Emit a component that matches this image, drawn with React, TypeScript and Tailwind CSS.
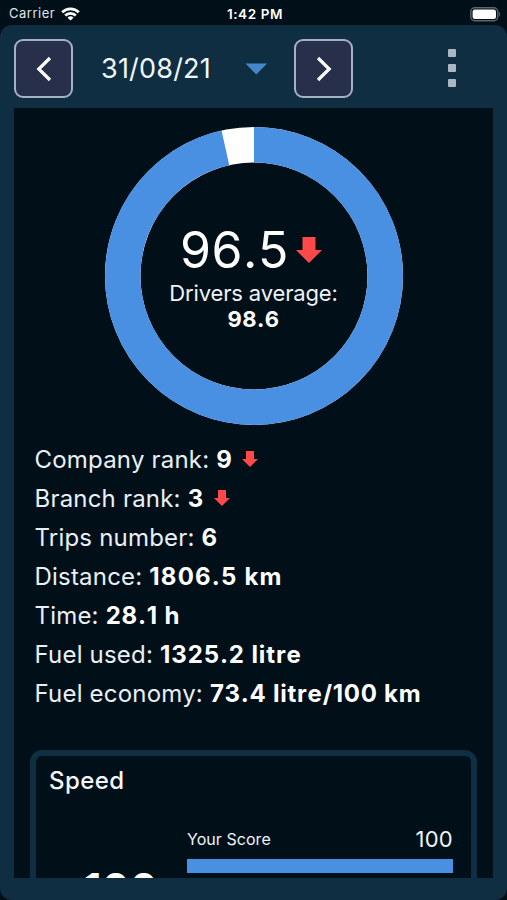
import type { ReactNode } from "react";

const SCORE = 96.5;

const stats = [
  { label: "Company rank:", value: "9", down: true, track: "tracking-[0.4px]" },
  { label: "Branch rank:", value: "3", down: true, track: "tracking-[0.4px]" },
  { label: "Trips number:", value: "6", track: "tracking-[0.4px]" },
  { label: "Distance:", value: "1806.5 km", track: "tracking-[1.2px]" },
  { label: "Time:", value: "28.1 h", track: "tracking-[0.8px]" },
  { label: "Fuel used:", value: "1325.2 litre", track: "tracking-[0.9px]" },
  { label: "Fuel economy:", value: "73.4 litre/100 km", track: "tracking-[0.75px]" },
];

const DownArrow = ({ className }: { className: string }) => (
  <svg viewBox="0 0 26 26" className={className} fill="#ff4949">
    <path d="M6.5 0h13v13H26L13 26 0 13h6.5z" />
  </svg>
);

const StatusBar = () => (
  <div className="h-[25px] grid grid-cols-3 items-center pl-[9px] pr-[6px] pt-[3px] text-[13px] text-[#dfe6ec]">
    <div className="flex items-center gap-[6px]">
      <span className="tracking-[0.5px]">Carrier</span>
      <svg width="19" height="14" viewBox="0 0 19 14" fill="none" stroke="#fff" strokeWidth="2.8">
        <path d="M1.2 5.2a11.8 11.8 0 0 1 16.6 0" />
        <path d="M4.2 8.5a7.5 7.5 0 0 1 10.6 0" />
        <path d="M9.5 13.6 6.5 10.7a4.3 4.3 0 0 1 6 0z" fill="#fff" stroke="none" />
      </svg>
    </div>
    <div className="text-center font-semibold text-white text-[13.5px] tracking-[0.6px] [font-kerning:none]">1:42 PM</div>
    <div className="flex justify-end">
      <svg width="31" height="15" viewBox="0 0 31 15">
        <rect x="0.8" y="0.8" width="27" height="13" rx="4" fill="none" stroke="#5d666d" strokeWidth="1.4" />
        <rect x="2.6" y="2.6" width="23.4" height="9.4" rx="2.2" fill="#fff" />
        <path d="M29 5c1.3.4 1.3 4.2 0 4.6z" fill="#5d666d" />
      </svg>
    </div>
  </div>
);

const NavButton = ({ children }: { children: ReactNode }) => (
  <button className="w-[59px] h-[59px] shrink-0 rounded-[9px] border-2 border-[#a5b1c3] bg-[#272f4b] flex items-center justify-center">
    <svg width="16" height="26" viewBox="0 0 16 26" fill="none" stroke="#fff" strokeWidth="3.2">
      {children}
    </svg>
  </button>
);

const Header = () => (
  <div className="h-[83px] pt-[14px] pl-[14px] pr-[51px] flex items-start">
    <NavButton>
      <path d="M14 2 2.8 13 14 24" />
    </NavButton>
    <div className="w-[221px] h-[59px] pl-[28px] pr-[27px] flex items-center justify-between">
      <span className="text-[27px] leading-none text-[#f0f7fb] whitespace-nowrap tracking-[0.2px]">31/08/21</span>
      <svg width="22" height="12" viewBox="0 0 22 12" fill="#4488ca">
        <path d="M.5 .5H22L11.3 11.5z" />
      </svg>
    </div>
    <NavButton>
      <path d="M2 2 13.2 13 2 24" />
    </NavButton>
    {/* MENU DOTS */}
    <div className="ml-auto h-[58px] flex flex-col items-center justify-center gap-[7px]">
      <div className="w-[8px] h-[8px] rounded-[1px] bg-[#a9b7c5]"></div>
      <div className="w-[8px] h-[8px] rounded-[1px] bg-[#a9b7c5]"></div>
      <div className="w-[8px] h-[8px] rounded-[1px] bg-[#a9b7c5]"></div>
    </div>
  </div>
);

const ScoreRing = () => (
  <div className="mx-auto w-[298px] h-[298px] grid">
    <svg viewBox="0 0 298 298" className="col-start-1 row-start-1 -rotate-90" fill="none" strokeWidth="35.5">
      <circle cx="149" cy="149" r="131.25" stroke="#fff" />
      <circle
        cx="149"
        cy="149"
        r="131.25"
        stroke="#4a90e2"
        pathLength="100"
        strokeDasharray={`${SCORE} ${100 - SCORE}`}
      />
    </svg>
    <div className="col-start-1 row-start-1 z-10 flex flex-col items-center pt-[94px] text-white">
      <div className="flex items-center gap-[7px] pr-[5px]">
        <span className="text-[50px] leading-[59px] tracking-[0.5px] [font-kerning:none]">96.5</span>
        <DownArrow className="w-[26px] h-[26px] mb-[2px]" />
      </div>
      <div className="text-[22px] leading-[26px] text-[#eef4f8] tracking-[-0.15px]">Drivers average:</div>
      <div className="text-[22px] leading-[26px] font-bold tracking-[0.5px] [font-kerning:none]">98.6</div>
    </div>
  </div>
);

const SpeedCard = () => (
  <div className="mt-[37px] mx-[16px] h-[260px] rounded-[12px] border-[6px] border-[#102e42] px-[13px] pt-[11px]">
    <h2 className="text-[24px] leading-[28px] font-medium text-[#f3f7fa] tracking-[0.4px]">Speed</h2>
    <div className="mt-[28px] flex">
      <div className="w-[138px] pt-[41px] pl-[35px] text-[40px] leading-[48px] font-bold text-white tracking-[1px]">
        100
      </div>
      <div className="w-[266px]">
        <div className="h-[32px] flex items-center justify-between text-[#eef4f8]">
          <span className="text-[16px] tracking-[0.05px]">Your Score</span>
          <span className="text-[22px] tracking-[0.3px]">100</span>
        </div>
        <div className="mt-[4px] h-[14px] bg-[#4a90e2]"></div>
      </div>
    </div>
  </div>
);

const App = () => {
  return (
    <div className="w-[507px] h-[900px] overflow-hidden bg-[#010f19] font-['Inter',sans-serif]">
      <StatusBar />
      <div className="h-[875px] rounded-[12px] bg-[#102e42]">
        <Header />
        <div className="mx-[14px] h-[770px] w-[479px] overflow-hidden bg-[#010f19] pt-[19px]">
          <ScoreRing />
          {/* STATS */}
          <ul className="mt-[15px] pl-[20.5px]">
            {stats.map((stat) => (
              <li
                className="h-[39px] flex items-center whitespace-pre text-[24px] tracking-[0.2px] text-[#e9f0f5]"
                key={stat.label}
              >
                {stat.label}{" "}
                <b className={`${stat.track} font-bold text-white [font-kerning:none]`}>{stat.value}</b>
                {stat.down && <DownArrow className="ml-[10px] mb-[1px] w-[16px] h-[16px]" />}
              </li>
            ))}
          </ul>
          <SpeedCard />
        </div>
      </div>
    </div>
  );
};

export default App;
